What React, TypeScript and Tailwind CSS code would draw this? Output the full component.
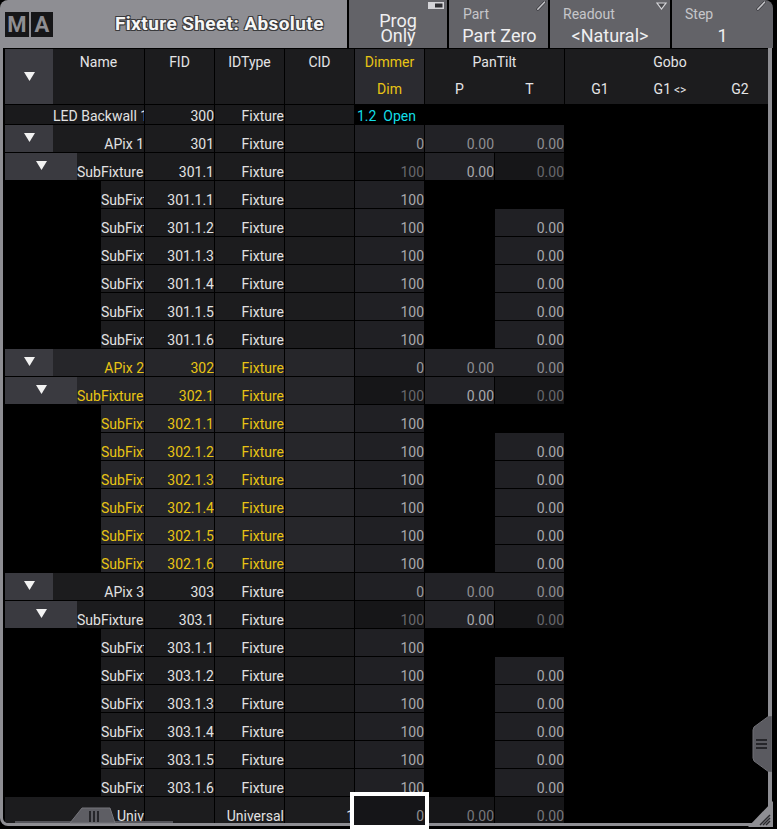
import React from 'react'

type Val = { text: string; cls: string } | null

interface SheetRow {
  level: 1 | 2 | 3
  name: string
  fid: string
  selected: boolean
  dim: Val
  p: Val
  t: Val
}

// value cell looks, bg + text colour
const APIX_DIM = 'bg-[#202024] text-[#9a9a9e]'
const APIX_PT = 'bg-[#222226] text-[#8e8e92]'
const SUB_DIM = 'bg-[#161618] text-[#68686c]'
const SUB_P = 'bg-[#222226] text-[#a8a8ac]'
const LEAF = 'bg-[#202024] text-[#a8a8ac]'

function group(n: number, selected: boolean): SheetRow[] {
  const fid = `30${n}`
  const rows: SheetRow[] = [
    {
      level: 1,
      name: `APix ${n}`,
      fid,
      selected,
      dim: { text: '0', cls: APIX_DIM },
      p: { text: '0.00', cls: APIX_PT },
      t: { text: '0.00', cls: APIX_PT },
    },
    {
      level: 2,
      name: 'SubFixture 1',
      fid: `${fid}.1`,
      selected,
      dim: { text: '100', cls: SUB_DIM },
      p: { text: '0.00', cls: SUB_P },
      t: { text: '0.00', cls: SUB_DIM },
    },
  ]
  for (let k = 1; k <= 6; k++) {
    rows.push({
      level: 3,
      name: `SubFixture ${k}`,
      fid: `${fid}.1.${k}`,
      selected,
      dim: { text: '100', cls: LEAF },
      p: null,
      t: k === 1 ? null : { text: '0.00', cls: LEAF },
    })
  }
  return rows
}

const ROWS: SheetRow[] = [...group(1, false), ...group(2, true), ...group(3, false)]

function Tri() {
  return (
    <svg width="11" height="9" viewBox="0 0 11 9">
      <polygon points="0,0 11,0 5.5,9" fill="#f2f2f2" />
    </svg>
  )
}

function Pencil() {
  return (
    <svg width="10" height="10" viewBox="0 0 10 10">
      <line x1="8.5" y1="1.2" x2="1.8" y2="8.2" stroke="#3c3c40" strokeWidth="3" strokeLinecap="round" />
      <line x1="8.5" y1="1.2" x2="1.8" y2="8.2" stroke="#c4c4c8" strokeWidth="1.6" strokeLinecap="round" />
    </svg>
  )
}

function Cell({ className, children }: { className: string; children?: React.ReactNode }) {
  return (
    <div className={`h-full shrink-0 overflow-hidden whitespace-nowrap text-right ${className}`}>
      {children}
    </div>
  )
}

function RowView({ row }: { row: SheetRow }) {
  const tone = row.selected ? 'bg-[#26262a] text-[#e8c414]' : 'bg-[#1c1c1e] text-[#e2e2e2]'
  const join = row.level === 1

  return (
    <div className="flex h-[27px] shrink-0 text-[14px] leading-4">
      {row.level === 1 && (
        <>
          <div className="flex w-[48px] shrink-0 justify-center bg-[#3a3a40] pt-[8px]">
            <Tri />
          </div>
          <Cell className={`w-[91px] pt-[11px] ${tone}`}>{row.name}</Cell>
        </>
      )}
      {row.level === 2 && (
        <>
          <div className="flex w-[72px] shrink-0 justify-center bg-[#3a3a40] pt-[8px]">
            <Tri />
          </div>
          <Cell className={`w-[67px] pt-[11px] ${tone}`}>{row.name}</Cell>
        </>
      )}
      {row.level === 3 && (
        <>
          <div className="w-[96px] shrink-0" />
          <Cell className={`w-[43px] pt-[11px] ${tone}`}>{row.name}</Cell>
        </>
      )}
      <Cell className={`ml-px w-[69px] pt-[11px] ${tone}`}>{row.fid}</Cell>
      <Cell className={`ml-px w-[69px] pt-[11px] ${tone}`}>Fixture</Cell>
      <Cell className={`ml-px w-[69px] pt-[11px] ${tone}`} />
      {row.dim && <Cell className={`ml-px w-[69px] pt-[11px] ${row.dim.cls}`}>{row.dim.text}</Cell>}
      {row.p ? (
        <Cell className={`ml-px pt-[11px] ${join ? 'w-[70px] pr-px' : 'w-[69px]'} ${row.p.cls}`}>{row.p.text}</Cell>
      ) : (
        <div className="ml-px w-[69px] shrink-0" />
      )}
      {row.t && (
        <Cell className={`w-[69px] pt-[11px] ${join ? '' : 'ml-px'} ${row.t.cls}`}>{row.t.text}</Cell>
      )}
    </div>
  )
}

function Header() {
  return (
    <div className="flex h-[55px] shrink-0 text-[14px] leading-4 text-[#e4e4e6]">
      <div className="flex w-[48px] shrink-0 items-center justify-center bg-[#3c3c42]">
        <Tri />
      </div>
      <div className="w-[91px] shrink-0 bg-[#1c1c1e] pt-[5px] text-center">Name</div>
      <div className="ml-px w-[69px] shrink-0 bg-[#1c1c1e] pt-[5px] text-center">FID</div>
      <div className="ml-px w-[69px] shrink-0 bg-[#1c1c1e] pt-[5px] text-center">IDType</div>
      <div className="ml-px w-[69px] shrink-0 bg-[#1c1c1e] pt-[5px] text-center">CID</div>
      <div className="ml-px flex w-[69px] shrink-0 flex-col bg-[#2b2b30] pt-[5px] text-center text-[#e8c414]">
        <span>Dimmer</span>
        <span className="mt-[11px]">Dim</span>
      </div>
      <div className="ml-px flex w-[139px] shrink-0 flex-col bg-[#1c1c1e] pt-[5px] text-center">
        <span>PanTilt</span>
        <div className="mt-[11px] flex">
          <span className="w-[69px]">P</span>
          <span className="ml-px w-[69px]">T</span>
        </div>
      </div>
      <div className="ml-px flex w-[210px] shrink-0 flex-col bg-[#1c1c1e] pt-[5px] text-center">
        <span>Gobo</span>
        <div className="mt-[11px] flex">
          <span className="w-[70px]">G1</span>
          <span className="w-[70px]">
            G1<span className="ml-[3px] text-[12px]">&lt;&gt;</span>
          </span>
          <span className="w-[70px]">G2</span>
        </div>
      </div>
    </div>
  )
}

function TitleBar() {
  return (
    <div className="flex h-[48px] w-[773px] shrink-0 gap-[2px] overflow-hidden rounded-t-[8px] bg-black">
      <div className="flex w-[347px] shrink-0 items-center bg-[#8e8e93]">
        <div className="ml-[5px] flex gap-[2px]">
          <div className="flex h-[25px] w-[24px] items-center justify-center bg-[#161618] text-[22px] font-bold text-[#8e8e93]">
            M
          </div>
          <div className="flex h-[25px] w-[22px] items-center justify-center bg-[#161618] text-[22px] font-bold text-[#8e8e93]">
            A
          </div>
        </div>
        <div className="ml-[62px] whitespace-nowrap text-[19px] font-bold tracking-[0.4px] text-[#f6f6f6] [text-shadow:-1px_-1px_0_#3a3a3c,1px_-1px_0_#3a3a3c,-1px_1px_0_#3a3a3c,1px_1px_0_#3a3a3c,0_1px_0_#3a3a3c,0_-1px_0_#3a3a3c]">
          Fixture Sheet: Absolute
        </div>
      </div>

      <div className="relative flex w-[98px] shrink-0 flex-col items-center bg-[#636368] pt-[13px] text-[18px] leading-[15px] text-[#efeff1]">
        <span>Prog</span>
        <span>Only</span>
        <svg className="absolute left-[79px] top-[2px]" width="16" height="7" viewBox="0 0 16 7">
          <rect x="0.5" y="0.5" width="15" height="6" fill="#d4d4d8" stroke="#d4d4d8" />
          <rect x="7" y="1.5" width="7.5" height="4" fill="#2e2e32" />
        </svg>
      </div>

      <div className="relative flex w-[99px] shrink-0 flex-col bg-[#636368] pt-[6px]">
        <span className="pl-[14px] text-[14px] leading-4 text-[#c6c6ca]">Part</span>
        <span className="mt-[4px] pl-[2px] text-center text-[18px] leading-5 text-[#efeff1]">Part Zero</span>
        <div className="absolute left-[87px] top-[1px]">
          <Pencil />
        </div>
      </div>

      <div className="relative flex w-[120px] shrink-0 flex-col bg-[#636368] pt-[6px]">
        <span className="pl-[13px] text-[14px] leading-4 text-[#c6c6ca]">Readout</span>
        <span className="mt-[4px] text-center text-[18px] leading-5 text-[#efeff1]">&lt;Natural&gt;</span>
        <svg className="absolute left-[106px] top-[2px]" width="11" height="8" viewBox="0 0 11 8">
          <polygon points="1,1 10,1 5.5,7" fill="#4a4a4e" stroke="#d4d4d8" strokeWidth="1.2" />
        </svg>
      </div>

      <div className="relative flex w-[101px] shrink-0 flex-col bg-[#636368] pt-[6px]">
        <span className="pl-[13px] text-[14px] leading-4 text-[#c6c6ca]">Step</span>
        <span className="mt-[4px] text-center text-[18px] leading-5 text-[#efeff1]">1</span>
        <div className="absolute left-[84px] top-[1px]">
          <Pencil />
        </div>
      </div>
    </div>
  )
}

export default function App() {
  return (
    <div className="relative h-[829px] w-[777px] overflow-hidden bg-black font-[Roboto,sans-serif]">
      <TitleBar />

      <div className="h-[778px] w-[772px] overflow-hidden rounded-bl-[8px] border-b-[3px] border-l-[3px] border-r-[4px] border-[#8e8e93] bg-black">
        <div className="flex h-full flex-col gap-px overflow-hidden pl-[2px] pt-px">
          <Header />

          {/* first row, scrolled half under the header */}
          <div className="flex h-[19px] shrink-0 text-[14px] leading-4 text-[#e2e2e2]">
            <Cell className="w-[139px] bg-[#1a1a1c] pl-[48px] pt-[3px]">LED Backwall 1</Cell>
            <Cell className="ml-px w-[69px] bg-[#1a1a1c] pt-[3px]">300</Cell>
            <Cell className="ml-px w-[69px] bg-[#1a1a1c] pt-[3px]">Fixture</Cell>
            <Cell className="ml-px w-[69px] bg-[#1a1a1c] pt-[3px]" />
            <div className="ml-px w-[69px] shrink-0 whitespace-pre pl-[2px] pt-[3px] text-[#12dde6]">1.2  Open</div>
          </div>

          {ROWS.map((row) => (
            <RowView key={row.fid} row={row} />
          ))}

          <div className="flex h-[27px] shrink-0 text-[14px] leading-4 text-[#e2e2e2]">
            <div className="w-[139px] shrink-0 overflow-hidden whitespace-nowrap bg-[#1c1c1e] pl-[112px] pt-[11px]">
              Universal
            </div>
            <Cell className="ml-px w-[69px] bg-[#1c1c1e] pt-[11px]" />
            <Cell className="ml-px w-[69px] bg-[#1c1c1e] pt-[11px]">Universal</Cell>
            <Cell className="ml-px w-[69px] bg-[#1c1c1e] pt-[11px]">1</Cell>
            <Cell className="ml-px w-[69px] bg-[#202024] pt-[11px] text-[#9a9a9e]">0</Cell>
            <Cell className="ml-px w-[69px] bg-[#161618] pt-[11px] text-[#78787c]">0.00</Cell>
            <Cell className="ml-px w-[69px] bg-[#161618] pt-[11px] text-[#78787c]">0.00</Cell>
          </div>
        </div>
      </div>

      {/* horizontal scroll track + handle */}
      <svg className="absolute left-[15px] top-[806px]" width="160" height="18" viewBox="0 0 160 18">
        <rect x="0" y="15" width="158" height="2" fill="#55555b" />
        <polygon points="55,17 67,2 95,2 100,17" fill="#5e5e64" stroke="#74747a" strokeWidth="1" />
        <line x1="75" y1="5" x2="75" y2="16" stroke="#26262a" strokeWidth="2" />
        <line x1="79" y1="5" x2="79" y2="16" stroke="#26262a" strokeWidth="2" />
        <line x1="83" y1="5" x2="83" y2="16" stroke="#26262a" strokeWidth="2" />
      </svg>

      {/* vertical scroll handle */}
      <svg className="absolute left-[752px] top-[716px]" width="20" height="56" viewBox="0 0 20 56">
        <polygon points="17,0 2,11 1,14 1,42 2,45 17,56 20,56 20,0" fill="#5a5a60" stroke="#707076" strokeWidth="1" />
        <line x1="4" y1="24" x2="15" y2="24" stroke="#26262a" strokeWidth="2" />
        <line x1="4" y1="28" x2="15" y2="28" stroke="#26262a" strokeWidth="2" />
        <line x1="4" y1="32" x2="15" y2="32" stroke="#26262a" strokeWidth="2" />
      </svg>

      {/* resize grip */}
      <svg className="absolute left-[748px] top-[801px]" width="25" height="26" viewBox="0 0 25 26">
        <polygon points="25,0 25,26 0,26" fill="#8e8e93" />
        <line x1="12" y1="24" x2="22" y2="14" stroke="#2a2a2e" strokeWidth="1.5" />
        <line x1="15" y1="24" x2="22" y2="17" stroke="#2a2a2e" strokeWidth="1.5" />
        <line x1="18" y1="24" x2="22" y2="20" stroke="#2a2a2e" strokeWidth="1.5" />
      </svg>

      {/* cell cursor */}
      <div className="absolute left-[350px] top-[792px] h-[37px] w-[79px] border-4 border-white bg-[#151518] pr-px pt-[12px] text-right text-[14px] leading-4 text-[#8e8e92]">
        0
      </div>
    </div>
  )
}
